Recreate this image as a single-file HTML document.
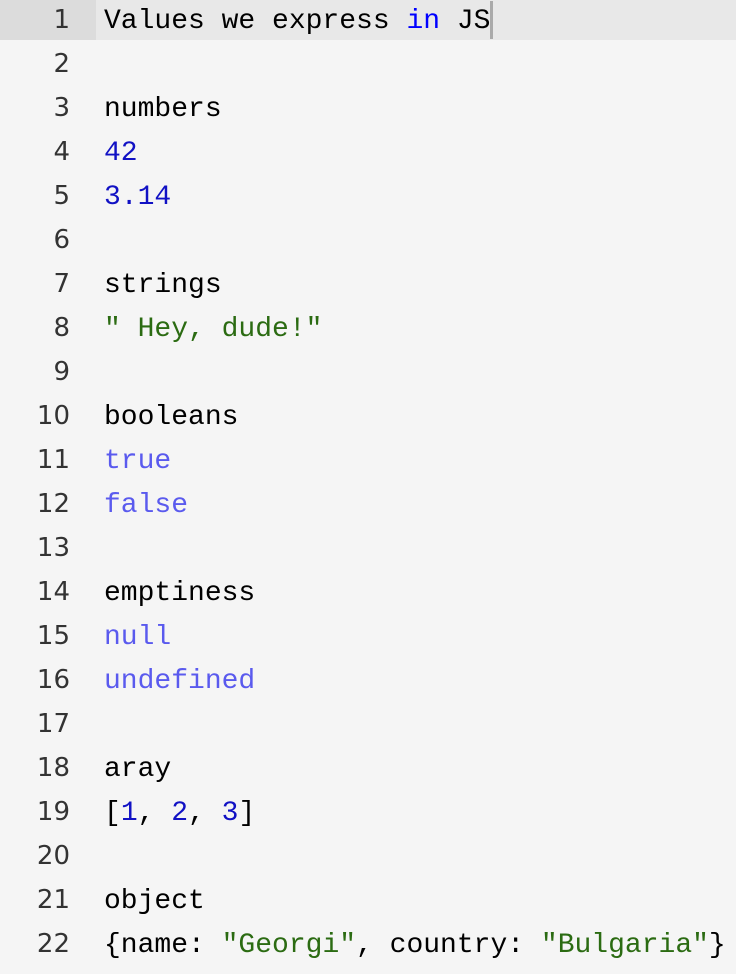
<!DOCTYPE html>
<html><head><style>
html,body{margin:0;padding:0;background:#f5f5f5;width:736px;height:974px;overflow:hidden}
.band{position:absolute;left:0;top:0;width:736px;height:40px;background:#e8e8e8}
.gband{position:absolute;left:0;top:0;width:96px;height:40px;background:#dcdcdc}
.cur{position:absolute;left:490px;top:1px;width:3px;height:38px;background:#aaa}
.wrap{position:absolute;left:0;top:0px}
.row{height:44px;line-height:44px;position:relative;white-space:pre}
.n{position:absolute;left:0;top:-2px;width:70px;text-align:right;font-family:"DejaVu Sans","Liberation Sans",sans-serif;font-size:26px;color:#333}
.c{position:absolute;left:104px;font-family:"Liberation Mono","DejaVu Sans Mono",monospace;font-size:28px;color:#000}
.k{color:#0000ff}.num{color:#1111c4}.a{color:#5a5aee}.s{color:#2b6b12}
</style></head><body>
<div class="band"></div><div class="gband"></div><div class="cur"></div>
<div class="wrap">
<div class="row"><span class="n">1</span><span class="c">Values we express <span class="k">in</span> JS</span></div>
<div class="row"><span class="n">2</span></div>
<div class="row"><span class="n">3</span><span class="c">numbers</span></div>
<div class="row"><span class="n">4</span><span class="c num">42</span></div>
<div class="row"><span class="n">5</span><span class="c num">3.14</span></div>
<div class="row"><span class="n">6</span></div>
<div class="row"><span class="n">7</span><span class="c">strings</span></div>
<div class="row"><span class="n">8</span><span class="c s">" Hey, dude!"</span></div>
<div class="row"><span class="n">9</span></div>
<div class="row"><span class="n">10</span><span class="c">booleans</span></div>
<div class="row"><span class="n">11</span><span class="c a">true</span></div>
<div class="row"><span class="n">12</span><span class="c a">false</span></div>
<div class="row"><span class="n">13</span></div>
<div class="row"><span class="n">14</span><span class="c">emptiness</span></div>
<div class="row"><span class="n">15</span><span class="c a">null</span></div>
<div class="row"><span class="n">16</span><span class="c a">undefined</span></div>
<div class="row"><span class="n">17</span></div>
<div class="row"><span class="n">18</span><span class="c">aray</span></div>
<div class="row"><span class="n">19</span><span class="c">[<span class="num">1</span>, <span class="num">2</span>, <span class="num">3</span>]</span></div>
<div class="row"><span class="n">20</span></div>
<div class="row"><span class="n">21</span><span class="c">object</span></div>
<div class="row"><span class="n">22</span><span class="c">{name: <span class="s">"Georgi"</span>, country: <span class="s">"Bulgaria"</span>}</span></div>
</div>
</body></html>
